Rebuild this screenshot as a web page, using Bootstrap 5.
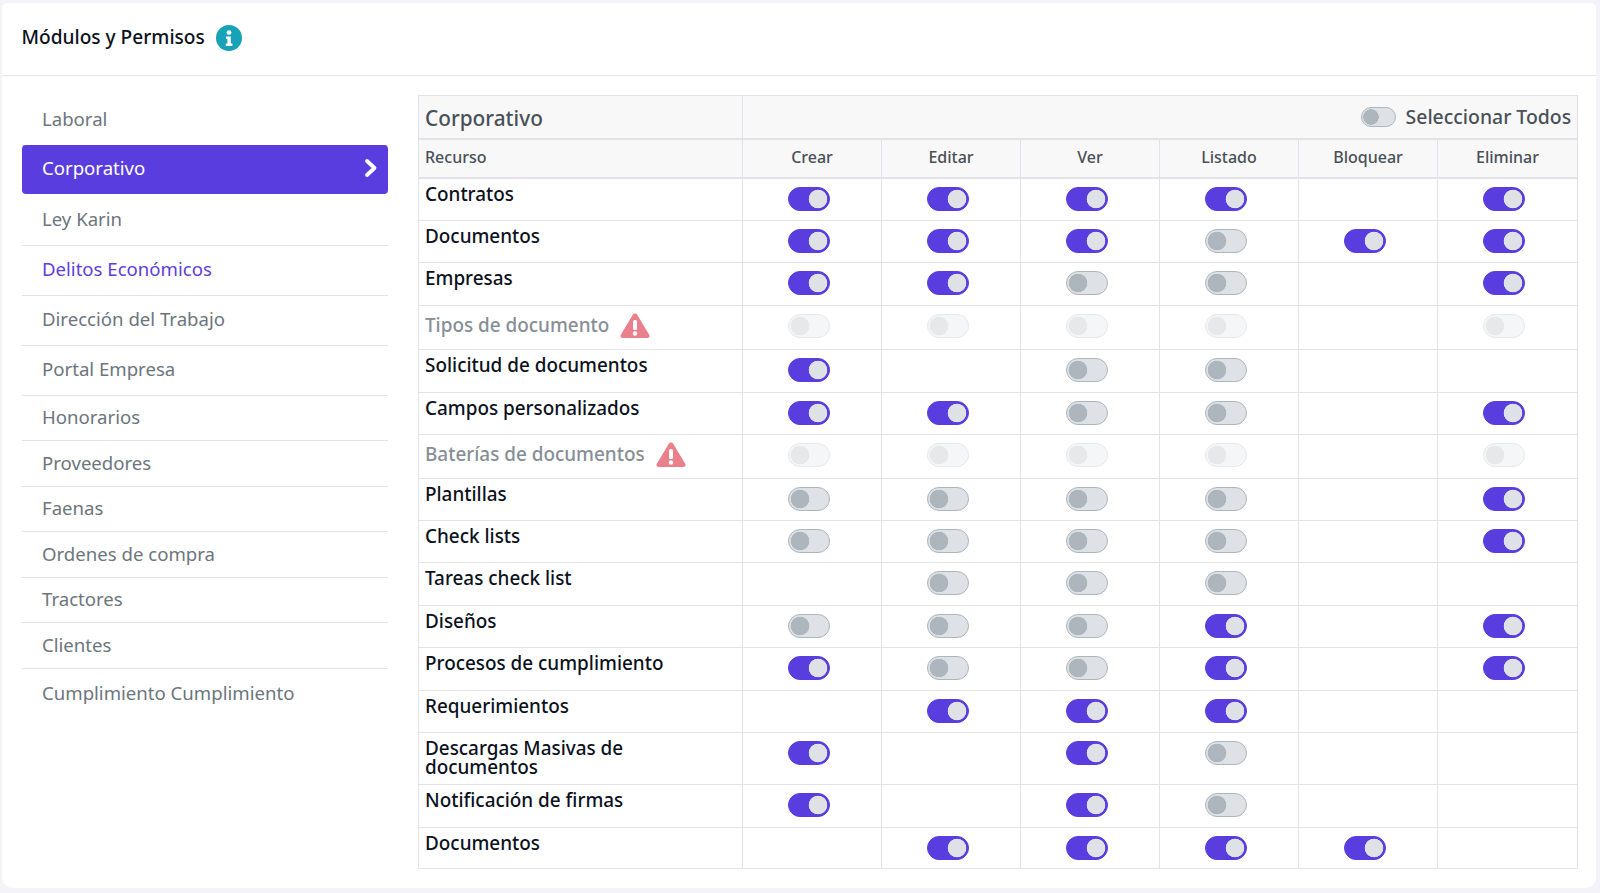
<!DOCTYPE html>
<html lang="es"><head><meta charset="utf-8"><title>Módulos y Permisos</title>
<link href="https://cdn.jsdelivr.net/npm/bootstrap@5.3.0/dist/css/bootstrap.min.css" rel="stylesheet">
<style>
html,body{height:100%}
body{background:#f3f3f9;padding:3px 4px 5px 2px;font-family:"Noto Sans","Open Sans",sans-serif;overflow:hidden}
.panel{height:100%;border:0;border-radius:10px;background:#fff}
.panel-head{flex:none;height:73px;padding:0 20px 3px 19.500px;background:#fff;border-bottom:1px solid #e4e6ea;font-size:19.100px;font-weight:500;color:#0b1120;gap:11px}
.panel-body{padding:19px 19px 0 20px;gap:30px}
.side{width:366px;flex:none}
.side .list-group-item{padding:0 20px 1.500px;height:50px;font-size:18.600px;color:#6c757d;border-color:#e0e2e6;background:transparent}
.side .list-group-item.first{height:50.500px}
.side .list-group-item.sm{height:45.500px}
.side .list-group-item.active{background:#5a3ddf;color:#fff;border:0;border-radius:4px;height:49px;margin-bottom:2px;padding-right:10px}
.side .list-group-item.hl{color:#5f3ddb}
.perm{width:1159px;table-layout:fixed;border-collapse:collapse;margin:0;border:1px solid #e1e3e8}
.perm col{width:139px}
.perm col:first-child{width:324px}
.perm col:last-child{width:140px}
.perm td,.perm th{border:1px solid #e1e3e8;padding:0}
.perm .h1 th{background:#f8f8f9;height:43px;font-size:20.800px;font-weight:500;color:#495057;padding:4px 6px 0;vertical-align:middle}
.perm .h2 th{background:#f8f8f9;height:39px;font-size:16px;font-weight:500;color:#495057;text-align:center;border-bottom-width:2px;border-top-width:2px;vertical-align:middle}
.perm .h2 th:first-child{text-align:left;padding:0 6px}
.perm .nm{font-size:18.900px;font-weight:500;line-height:19px;color:#0b1120;padding:6px 24px 0 6px;vertical-align:top}
.perm .off .nm{color:#868e96;padding-top:6px}
.perm .sw{text-align:center;padding:8px 7px 0 0;vertical-align:top;line-height:0}
.perm tbody tr{height:42px}
.perm tbody tr.t41{height:41px}
.perm tbody tr.t43{height:43px}
.perm tbody tr.t44{height:44px}
.perm tbody tr.t52{height:52px}
.perm .h1 .all{font-size:19.400px;padding:0 6px 0 0}
.perm .all .gapper{gap:10px}
.form-switch.tw{display:inline-block;padding:0;margin:0;min-height:0;line-height:0}
.form-switch .form-check-input.tg{width:42px;height:24px;margin:0;float:none;border:1px solid #adb5bd;background-color:#dee2e6;background-image:radial-gradient(circle at 11px 11px,#adb5bd 9px,transparent 9.600px);background-position:0 0;background-size:auto;opacity:1;box-shadow:none}
.form-switch .form-check-input.tg:checked{background-color:#5a3ddf;border-color:#5a3ddf;background-image:radial-gradient(circle at 29px 11px,#dee2e6 9px,transparent 9.600px)}
.form-switch .form-check-input.tg:disabled{opacity:.3}
.form-switch .form-check-input.mini{width:35px;height:20px;background-image:radial-gradient(circle at 9px 9px,#adb5bd 7.500px,transparent 8px)}
.warn{margin-left:11px;vertical-align:-6px}
</style></head><body>
<div class="card panel">
<div class="card-header panel-head d-flex align-items-center">Módulos y Permisos
<svg width="26" height="26" viewBox="0 0 26 26"><circle cx="13" cy="13" r="13" fill="#17a2b8"/><circle cx="13" cy="7.6" r="2.4" fill="#fff"/><path d="M10 11.4h4.8v7.1h1.6v2.4H9.8v-2.4h1.6v-4.7H10z" fill="#fff"/></svg></div>
<div class="card-body panel-body d-flex align-items-start">
<div class="list-group list-group-flush side">
<a class="list-group-item first d-flex align-items-center">Laboral</a>
<a class="list-group-item active d-flex align-items-center justify-content-between">Corporativo<svg width="14" height="20" viewBox="0 0 14 20"><path d="M3 3l7.500 7-7.500 7" fill="none" stroke="#fff" stroke-width="3.800" stroke-linecap="round" stroke-linejoin="round"/></svg></a>
<a class="list-group-item d-flex align-items-center">Ley Karin</a>
<a class="list-group-item hl d-flex align-items-center">Delitos Económicos</a>
<a class="list-group-item d-flex align-items-center">Dirección del Trabajo</a>
<a class="list-group-item d-flex align-items-center">Portal Empresa</a>
<a class="list-group-item sm d-flex align-items-center">Honorarios</a>
<a class="list-group-item sm d-flex align-items-center">Proveedores</a>
<a class="list-group-item sm d-flex align-items-center">Faenas</a>
<a class="list-group-item sm d-flex align-items-center">Ordenes de compra</a>
<a class="list-group-item sm d-flex align-items-center">Tractores</a>
<a class="list-group-item sm d-flex align-items-center">Clientes</a>
<a class="list-group-item d-flex align-items-center">Cumplimiento Cumplimiento</a>
</div>
<table class="table perm">
<colgroup><col><col><col><col><col><col><col></colgroup>
<thead>
<tr class="h1"><th>Corporativo</th><th colspan="6" class="all"><div class="d-flex justify-content-end align-items-center gapper"><div class="form-check form-switch tw"><input class="form-check-input tg mini" type="checkbox"></div>Seleccionar Todos</div></th></tr>
<tr class="h2"><th>Recurso</th><th>Crear</th><th>Editar</th><th>Ver</th><th>Listado</th><th>Bloquear</th><th>Eliminar</th></tr>
</thead>
<tbody>
<tr class="t43"><td class="nm">Contratos</td><td class="sw"><div class="form-check form-switch tw"><input class="form-check-input tg" type="checkbox" checked></div></td><td class="sw"><div class="form-check form-switch tw"><input class="form-check-input tg" type="checkbox" checked></div></td><td class="sw"><div class="form-check form-switch tw"><input class="form-check-input tg" type="checkbox" checked></div></td><td class="sw"><div class="form-check form-switch tw"><input class="form-check-input tg" type="checkbox" checked></div></td><td class="sw"></td><td class="sw"><div class="form-check form-switch tw"><input class="form-check-input tg" type="checkbox" checked></div></td></tr>
<tr><td class="nm">Documentos</td><td class="sw"><div class="form-check form-switch tw"><input class="form-check-input tg" type="checkbox" checked></div></td><td class="sw"><div class="form-check form-switch tw"><input class="form-check-input tg" type="checkbox" checked></div></td><td class="sw"><div class="form-check form-switch tw"><input class="form-check-input tg" type="checkbox" checked></div></td><td class="sw"><div class="form-check form-switch tw"><input class="form-check-input tg" type="checkbox"></div></td><td class="sw"><div class="form-check form-switch tw"><input class="form-check-input tg" type="checkbox" checked></div></td><td class="sw"><div class="form-check form-switch tw"><input class="form-check-input tg" type="checkbox" checked></div></td></tr>
<tr class="t43"><td class="nm">Empresas</td><td class="sw"><div class="form-check form-switch tw"><input class="form-check-input tg" type="checkbox" checked></div></td><td class="sw"><div class="form-check form-switch tw"><input class="form-check-input tg" type="checkbox" checked></div></td><td class="sw"><div class="form-check form-switch tw"><input class="form-check-input tg" type="checkbox"></div></td><td class="sw"><div class="form-check form-switch tw"><input class="form-check-input tg" type="checkbox"></div></td><td class="sw"></td><td class="sw"><div class="form-check form-switch tw"><input class="form-check-input tg" type="checkbox" checked></div></td></tr>
<tr class="off t44"><td class="nm">Tipos de documento<svg class="warn" width="30" height="26" viewBox="0 0 30 26"><path d="M15 1.5c.9 0 1.7.5 2.2 1.3l12 20c1 1.6-.2 3.2-2 3.2H2.800c-1.800 0-3-1.600-2-3.200l12-20c.5-.8 1.300-1.300 2.200-1.300z" fill="#e9808c"/><rect x="13" y="8" width="4" height="10" rx="1.500" fill="#fff"/><circle cx="15" cy="21.500" r="2.200" fill="#fff"/></svg></td><td class="sw"><div class="form-check form-switch tw"><input class="form-check-input tg" type="checkbox" disabled></div></td><td class="sw"><div class="form-check form-switch tw"><input class="form-check-input tg" type="checkbox" disabled></div></td><td class="sw"><div class="form-check form-switch tw"><input class="form-check-input tg" type="checkbox" disabled></div></td><td class="sw"><div class="form-check form-switch tw"><input class="form-check-input tg" type="checkbox" disabled></div></td><td class="sw"></td><td class="sw"><div class="form-check form-switch tw"><input class="form-check-input tg" type="checkbox" disabled></div></td></tr>
<tr class="t43"><td class="nm">Solicitud de documentos</td><td class="sw"><div class="form-check form-switch tw"><input class="form-check-input tg" type="checkbox" checked></div></td><td class="sw"></td><td class="sw"><div class="form-check form-switch tw"><input class="form-check-input tg" type="checkbox"></div></td><td class="sw"><div class="form-check form-switch tw"><input class="form-check-input tg" type="checkbox"></div></td><td class="sw"></td><td class="sw"></td></tr>
<tr><td class="nm">Campos personalizados</td><td class="sw"><div class="form-check form-switch tw"><input class="form-check-input tg" type="checkbox" checked></div></td><td class="sw"><div class="form-check form-switch tw"><input class="form-check-input tg" type="checkbox" checked></div></td><td class="sw"><div class="form-check form-switch tw"><input class="form-check-input tg" type="checkbox"></div></td><td class="sw"><div class="form-check form-switch tw"><input class="form-check-input tg" type="checkbox"></div></td><td class="sw"></td><td class="sw"><div class="form-check form-switch tw"><input class="form-check-input tg" type="checkbox" checked></div></td></tr>
<tr class="off t44"><td class="nm">Baterías de documentos<svg class="warn" width="30" height="26" viewBox="0 0 30 26"><path d="M15 1.5c.9 0 1.7.5 2.2 1.3l12 20c1 1.6-.2 3.2-2 3.2H2.800c-1.800 0-3-1.600-2-3.200l12-20c.5-.8 1.300-1.300 2.200-1.300z" fill="#e9808c"/><rect x="13" y="8" width="4" height="10" rx="1.500" fill="#fff"/><circle cx="15" cy="21.500" r="2.200" fill="#fff"/></svg></td><td class="sw"><div class="form-check form-switch tw"><input class="form-check-input tg" type="checkbox" disabled></div></td><td class="sw"><div class="form-check form-switch tw"><input class="form-check-input tg" type="checkbox" disabled></div></td><td class="sw"><div class="form-check form-switch tw"><input class="form-check-input tg" type="checkbox" disabled></div></td><td class="sw"><div class="form-check form-switch tw"><input class="form-check-input tg" type="checkbox" disabled></div></td><td class="sw"></td><td class="sw"><div class="form-check form-switch tw"><input class="form-check-input tg" type="checkbox" disabled></div></td></tr>
<tr><td class="nm">Plantillas</td><td class="sw"><div class="form-check form-switch tw"><input class="form-check-input tg" type="checkbox"></div></td><td class="sw"><div class="form-check form-switch tw"><input class="form-check-input tg" type="checkbox"></div></td><td class="sw"><div class="form-check form-switch tw"><input class="form-check-input tg" type="checkbox"></div></td><td class="sw"><div class="form-check form-switch tw"><input class="form-check-input tg" type="checkbox"></div></td><td class="sw"></td><td class="sw"><div class="form-check form-switch tw"><input class="form-check-input tg" type="checkbox" checked></div></td></tr>
<tr><td class="nm">Check lists</td><td class="sw"><div class="form-check form-switch tw"><input class="form-check-input tg" type="checkbox"></div></td><td class="sw"><div class="form-check form-switch tw"><input class="form-check-input tg" type="checkbox"></div></td><td class="sw"><div class="form-check form-switch tw"><input class="form-check-input tg" type="checkbox"></div></td><td class="sw"><div class="form-check form-switch tw"><input class="form-check-input tg" type="checkbox"></div></td><td class="sw"></td><td class="sw"><div class="form-check form-switch tw"><input class="form-check-input tg" type="checkbox" checked></div></td></tr>
<tr class="t43"><td class="nm">Tareas check list</td><td class="sw"></td><td class="sw"><div class="form-check form-switch tw"><input class="form-check-input tg" type="checkbox"></div></td><td class="sw"><div class="form-check form-switch tw"><input class="form-check-input tg" type="checkbox"></div></td><td class="sw"><div class="form-check form-switch tw"><input class="form-check-input tg" type="checkbox"></div></td><td class="sw"></td><td class="sw"></td></tr>
<tr><td class="nm">Diseños</td><td class="sw"><div class="form-check form-switch tw"><input class="form-check-input tg" type="checkbox"></div></td><td class="sw"><div class="form-check form-switch tw"><input class="form-check-input tg" type="checkbox"></div></td><td class="sw"><div class="form-check form-switch tw"><input class="form-check-input tg" type="checkbox"></div></td><td class="sw"><div class="form-check form-switch tw"><input class="form-check-input tg" type="checkbox" checked></div></td><td class="sw"></td><td class="sw"><div class="form-check form-switch tw"><input class="form-check-input tg" type="checkbox" checked></div></td></tr>
<tr class="t43"><td class="nm">Procesos de cumplimiento</td><td class="sw"><div class="form-check form-switch tw"><input class="form-check-input tg" type="checkbox" checked></div></td><td class="sw"><div class="form-check form-switch tw"><input class="form-check-input tg" type="checkbox"></div></td><td class="sw"><div class="form-check form-switch tw"><input class="form-check-input tg" type="checkbox"></div></td><td class="sw"><div class="form-check form-switch tw"><input class="form-check-input tg" type="checkbox" checked></div></td><td class="sw"></td><td class="sw"><div class="form-check form-switch tw"><input class="form-check-input tg" type="checkbox" checked></div></td></tr>
<tr><td class="nm">Requerimientos</td><td class="sw"></td><td class="sw"><div class="form-check form-switch tw"><input class="form-check-input tg" type="checkbox" checked></div></td><td class="sw"><div class="form-check form-switch tw"><input class="form-check-input tg" type="checkbox" checked></div></td><td class="sw"><div class="form-check form-switch tw"><input class="form-check-input tg" type="checkbox" checked></div></td><td class="sw"></td><td class="sw"></td></tr>
<tr class="t52"><td class="nm">Descargas Masivas de documentos</td><td class="sw"><div class="form-check form-switch tw"><input class="form-check-input tg" type="checkbox" checked></div></td><td class="sw"></td><td class="sw"><div class="form-check form-switch tw"><input class="form-check-input tg" type="checkbox" checked></div></td><td class="sw"><div class="form-check form-switch tw"><input class="form-check-input tg" type="checkbox"></div></td><td class="sw"></td><td class="sw"></td></tr>
<tr class="t43"><td class="nm">Notificación de firmas</td><td class="sw"><div class="form-check form-switch tw"><input class="form-check-input tg" type="checkbox" checked></div></td><td class="sw"></td><td class="sw"><div class="form-check form-switch tw"><input class="form-check-input tg" type="checkbox" checked></div></td><td class="sw"><div class="form-check form-switch tw"><input class="form-check-input tg" type="checkbox"></div></td><td class="sw"></td><td class="sw"></td></tr>
<tr class="t41"><td class="nm">Documentos</td><td class="sw"></td><td class="sw"><div class="form-check form-switch tw"><input class="form-check-input tg" type="checkbox" checked></div></td><td class="sw"><div class="form-check form-switch tw"><input class="form-check-input tg" type="checkbox" checked></div></td><td class="sw"><div class="form-check form-switch tw"><input class="form-check-input tg" type="checkbox" checked></div></td><td class="sw"><div class="form-check form-switch tw"><input class="form-check-input tg" type="checkbox" checked></div></td><td class="sw"></td></tr>
</tbody></table>
</div></div>
</body></html>
